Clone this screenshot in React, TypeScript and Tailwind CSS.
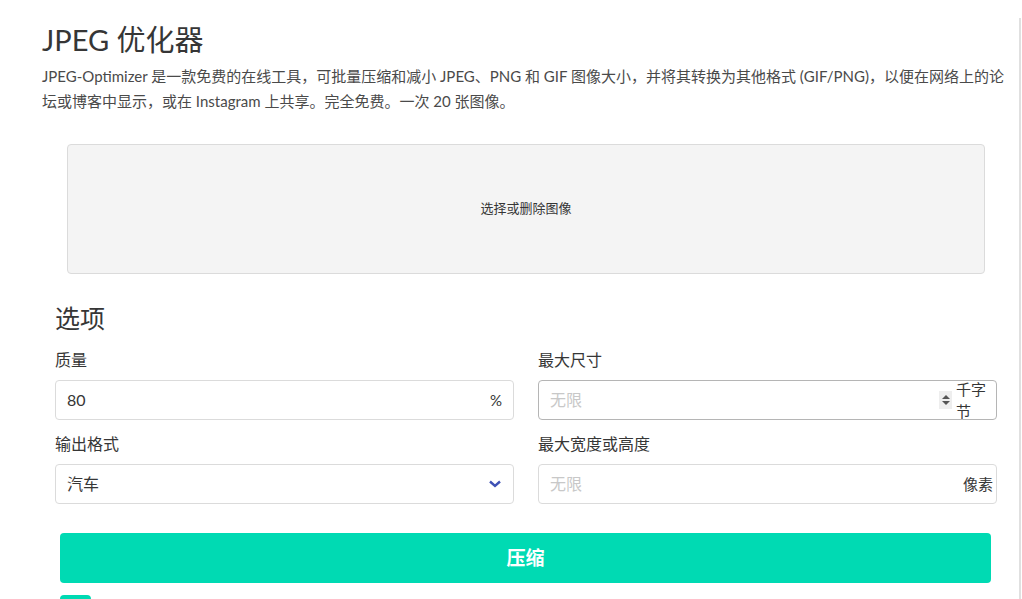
import React from 'react';

const font = { fontFamily: 'Lato, "Noto Sans CJK SC", sans-serif' };

export default function App() {
  return (
    <div className="relative h-[599px] w-[1022px] overflow-hidden bg-white text-[#4a4a4a]" style={font}>
      <div className="absolute right-[1px] top-[18px] h-[600px] w-[2px] bg-[#e0e0e0]" />
      <div className="w-[1012px] pl-[42px] pt-[20px]">
        <h1 className="text-[29px] leading-[40px] text-[#363636]">JPEG 优化器</h1>
        <p className="mt-[4px] text-[15px] leading-[25px]">
          JPEG-Optimizer 是一款免费的在线工具，可批量压缩和减小 JPEG、PNG 和 GIF 图像大小，并将其转换为其他格式 (GIF/PNG)，以便在网络上的论坛或博客中显示，或在 Instagram 上共享。完全免费。一次 20 张图像。
        </p>
      </div>
      <div className="ml-[67px] mt-[30px] flex h-[130px] w-[918px] items-center justify-center rounded-[4px] border border-[#dbdbdb] bg-[#f4f4f4] text-[13px] text-[#363636]">
        选择或删除图像
      </div>
      <div className="ml-[55px] w-[942px]">
        <h2 className="mt-[26px] text-[25px] leading-[36px] text-[#363636]">选项</h2>
        <div className="mt-[12px] grid grid-cols-2 gap-x-[24px]">
          <div>
            <div className="text-[16px] leading-[24px] text-[#363636]">质量</div>
            <div className="mt-[8px] flex h-[40px] items-center justify-between rounded-[4px] border border-[#dbdbdb] px-[11px] text-[16px] text-[#363636]">
              <span>80</span>
              <span className="text-[15px]">%</span>
            </div>
          </div>
          <div>
            <div className="text-[16px] leading-[24px] text-[#363636]">最大尺寸</div>
            <div className="mt-[8px] flex h-[40px] items-center rounded-[4px] border border-[#b5b5b5] pl-[11px] text-[16px]">
              <span className="flex-1 text-[#c8c8c8]">无限</span>
              <span className="mr-[4px] flex h-[18px] w-[13px] flex-col items-center justify-center gap-[2px] bg-[#eeeeee]">
                <span className="h-0 w-0 border-x-[4px] border-b-[4px] border-x-transparent border-b-[#555]" />
                <span className="h-0 w-0 border-x-[4px] border-t-[4px] border-x-transparent border-t-[#555]" />
              </span>
              <span className="w-[40px] text-[15px] leading-[22px] text-[#363636]">千字节</span>
            </div>
          </div>
          <div className="mt-[12px]">
            <div className="text-[16px] leading-[24px] text-[#363636]">输出格式</div>
            <div className="mt-[8px] flex h-[40px] items-center justify-between rounded-[4px] border border-[#dbdbdb] px-[11px] text-[16px] text-[#363636]">
              <span>汽车</span>
              <svg width="14" height="10" viewBox="0 0 14 10"><path d="M2 2.5 L7 7 L12 2.5" fill="none" stroke="#3f51b5" strokeWidth="2.4" /></svg>
            </div>
          </div>
          <div className="mt-[12px]">
            <div className="text-[16px] leading-[24px] text-[#363636]">最大宽度或高度</div>
            <div className="mt-[8px] flex h-[40px] items-center justify-between rounded-[4px] border border-[#dbdbdb] pl-[11px] pr-[3px] text-[16px]">
              <span className="text-[#c8c8c8]">无限</span>
              <span className="text-[15px] text-[#363636]">像素</span>
            </div>
          </div>
        </div>
        <button className="ml-[5px] mt-[29px] flex h-[50px] w-[931px] items-center justify-center rounded-[4px] bg-[#00dab3] text-[19px] font-bold text-white">
          压缩
        </button>
        <div className="ml-[5px] mt-[12px] h-[4px] w-[31px] rounded-t bg-[#00dab3]" />
      </div>
    </div>
  );
}
